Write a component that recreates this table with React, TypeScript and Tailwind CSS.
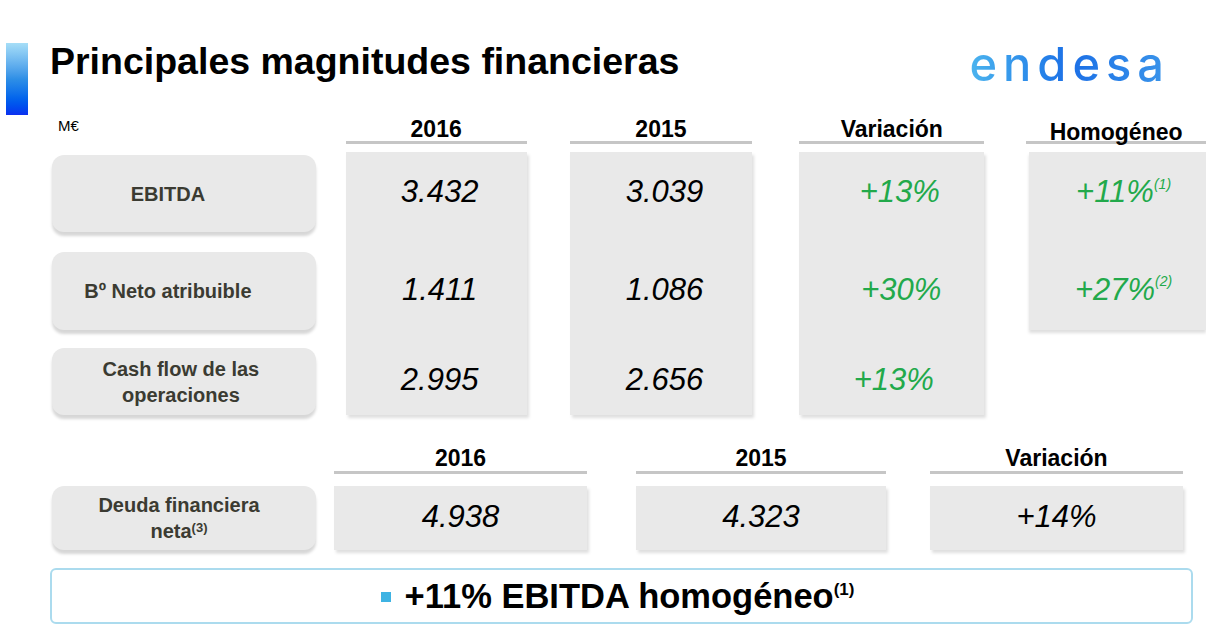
import React from "react";

const labelBox =
	"bg-[#e9e9e9] rounded-[12px] shadow-[0_4px_3px_rgba(0,0,0,0.16)] flex items-center justify-center text-center text-[20px] leading-[26px] font-bold text-[#3b3b32]";

const valueText = "italic text-[31px] leading-none text-black";
const greenText = "italic text-[31px] leading-none text-[#22a94b]";

function ColHeader({ title, className = "" }: { title: string; className?: string }) {
	return (
		<div
			className={`h-[27px] border-b-[3px] border-[#c6c6c6] flex items-start justify-center text-[23px] leading-[24px] font-bold text-black ${className}`}
		>
			{title}
		</div>
	);
}

function Logo() {
	return (
		<div className="text-[47px] leading-none font-['Inter',sans-serif] font-medium tracking-[6px] bg-linear-to-r from-[#4cb4ee] via-[#1c6fe6] to-[#3b95ea] bg-clip-text text-transparent">
			endesa
		</div>
	);
}

export default function App() {
	const rows = [
		{ label: "EBITDA", v16: "3.432", v15: "3.039", varia: "+13%", homo: "+11%", note: "(1)", h: "h-[77px]", mt: "mt-[3px]", lp: "pl-[4px] pr-[36px]", vp: "pl-[16px]" },
		{ label: "Bº Neto atribuible", v16: "1.411", v15: "1.086", varia: "+30%", homo: "+27%", note: "(2)", h: "h-[78px]", mt: "mt-[20px]", lp: "pl-[4px] pr-[36px]", vp: "pl-[19px]" },
		{ label: "Cash flow de las operaciones", v16: "2.995", v15: "2.656", varia: "+13%", homo: "", note: "", h: "h-[67px]", mt: "mt-[18px]", lp: "pl-[20px] pr-[26px]", vp: "pl-[4px]" },
	];

	return (
		<div className="w-[1206px] h-[626px] bg-white overflow-hidden font-['Liberation_Sans',Arial,sans-serif]">
			{/* Header */}
			<div className="flex items-start h-[117px]">
				<div className="mt-[43px] ml-[6px] w-[22px] h-[72px] bg-linear-to-b from-[#a6def7] via-[#2e8fe6] to-[#0d2ef0]" />
				<h1 className="ml-[22px] mt-[39px] text-[37.5px] leading-[44px] font-bold text-black">
					Principales magnitudes financieras
				</h1>
				<div className="ml-auto mr-[36px] mt-[40px]">
					<Logo />
				</div>
			</div>

			{/* First table */}
			<div className="flex pl-[52px] h-[298px]">
				<div className="w-[264px] flex flex-col">
					<div className="h-[35px] pl-[6px] text-[15px] leading-[18px] text-black">M€</div>
					{rows.map((r) => (
						<div key={r.label} className={`${labelBox} ${r.h} ${r.mt} ${r.lp}`}>
							{r.label}
						</div>
					))}
				</div>

				{[
					{ title: "2016", key: "v16", ml: "ml-[30px]", w: "w-[181px]" },
					{ title: "2015", key: "v15", ml: "ml-[43px]", w: "w-[183px]" },
					{ title: "Variación", key: "varia", ml: "ml-[47px]", w: "w-[185px]" },
				].map((c) => (
					<div key={c.title} className={`${c.ml} ${c.w} flex flex-col`}>
						<ColHeader title={c.title} />
						<div className="mt-[8px] h-[263px] bg-[#e9e9e9] shadow-[2px_3px_3px_rgba(0,0,0,0.13)] flex flex-col">
							{rows.map((r) => (
								<div
									key={r.label}
									className={`${r.h} ${r.mt} pb-[4px] flex items-center justify-center ${
										c.key === "varia" ? `${greenText} ${r.vp}` : `${valueText} pl-[7px]`
									}`}
								>
									{(r as any)[c.key]}
								</div>
							))}
						</div>
					</div>
				))}

				<div className="ml-[42px] w-[180px] flex flex-col">
					<ColHeader title="Homogéneo" className="pt-[3px] leading-[22px]" />
					<div className="mt-[8px] ml-[3px] h-[178px] bg-[#e9e9e9] shadow-[0_3px_3px_rgba(0,0,0,0.13)] flex flex-col">
						{rows.slice(0, 2).map((r) => (
							<div key={r.label} className={`${r.h} ${r.mt} pb-[4px] flex items-center justify-center pl-[12px] ${greenText}`}>
								{r.homo}
								<sup className="text-[14px] -top-[8px]">{r.note}</sup>
							</div>
						))}
					</div>
				</div>
			</div>

			{/* Second table */}
			<div className="flex pl-[52px] mt-[31px]">
				<div className="w-[264px] flex flex-col">
					<div className="h-[40px]" />
					<div className={`${labelBox} h-[64px] pr-[10px]`}>
						<span>
							Deuda financiera
							<br />
							neta<sup className="text-[13px] font-bold -top-[6px]">(3)</sup>
						</span>
					</div>
				</div>
				{[
					{ title: "2016", v: "4.938", ml: "ml-[18px]", w: "w-[253px]" },
					{ title: "2015", v: "4.323", ml: "ml-[49px]", w: "w-[250px]" },
					{ title: "Variación", v: "+14%", ml: "ml-[44px]", w: "w-[253px]" },
				].map((c) => (
					<div key={c.title} className={`${c.ml} ${c.w} flex flex-col`}>
						<ColHeader title={c.title} className="h-[28px]" />
						<div className={`mt-[12px] h-[64px] pb-[3px] bg-[#e9e9e9] shadow-[2px_3px_3px_rgba(0,0,0,0.13)] flex items-center justify-center ${valueText}`}>
							{c.v}
						</div>
					</div>
				))}
			</div>

			{/* Highlight */}
			<div className="ml-[50px] mt-[18px] w-[1143px] h-[56px] border-2 border-[#abdbee] rounded-[6px] flex items-center justify-center pr-[8px]">
				<span className="w-[10px] h-[10px] bg-[#3eb3e3] mr-[14px] mt-[2px]" />
				<span className="text-[34.5px] leading-none font-bold text-black">
					+11% EBITDA homogéneo<sup className="text-[17px] -top-[13px]">(1)</sup>
				</span>
			</div>
		</div>
	);
}
